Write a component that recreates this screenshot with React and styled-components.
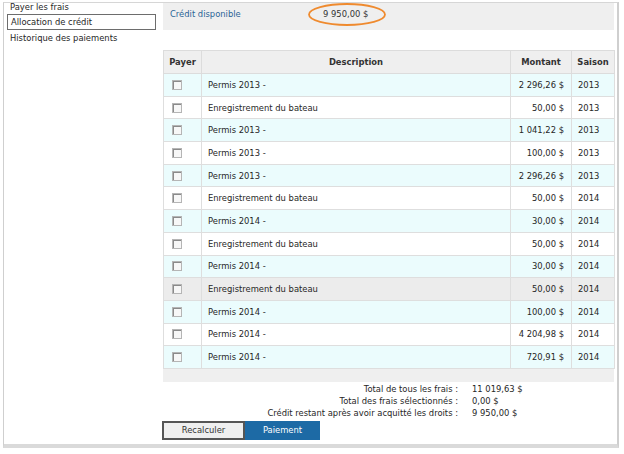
import React from "react";
import styled, { createGlobalStyle } from "styled-components";

const Global = createGlobalStyle`
  html, body { margin: 0; padding: 0; background: #fff; }
  body { font-family: "DejaVu Sans", Verdana, sans-serif; font-size: 8.4px; color: #262626; }
`;

const Frame = styled.div`
  position: relative;
  margin: 2px 0 0 3px;
  width: 613px;
  height: 441px;
  border-top: 1px solid #d6d6d6;
  border-left: 1px solid #cfcfcf;
  border-right: 2px solid #cfcfcf;
  border-bottom: 4px solid #dadada;
  display: flex;
  gap: 7px;
`;

const Sidebar = styled.nav`
  width: 149px;
  margin-top: -1px;
  padding-left: 3px;
  display: flex;
  flex-direction: column;
`;

const NavItem = styled.div`
  box-sizing: border-box;
  height: ${(p) => (p.$active ? "16px" : "11px")};
  line-height: ${(p) => (p.$active ? "14px" : "11px")};
  padding-left: 3px;
  margin: ${(p) => (p.$active ? "1px 0 3px 0" : "0")};
  border: ${(p) => (p.$active ? "1px solid #6d6d6d" : "none")};
  color: #262626;
  white-space: nowrap;
`;

const Main = styled.main`
  width: 451px;
  display: flex;
  flex-direction: column;
`;

const CreditBar = styled.div`
  position: relative;
  height: 27px;
  background: #efefef;
  display: flex;
  align-items: flex-start;
  padding-top: 6px;
  box-sizing: border-box;
`;

const CreditLabel = styled.span`
  color: #2a6496;
  margin-left: 7px;
  width: 153px;
`;

const CreditValue = styled.span`
  color: #333;
`;

const Ellipse = styled.svg`
  position: absolute;
  left: 144px;
  top: -1px;
`;

const Table = styled.table`
  margin-top: 20px;
  border-collapse: collapse;
  table-layout: fixed;
  width: 451px;
`;

const Th = styled.th`
  height: 22px;
  background: #efefef;
  border: 1px solid #dcdcdc;
  font-weight: bold;
  color: #333;
  text-align: center;
  padding: 0;
`;

const Row = styled.tr`
  background: ${(p) => (p.$tone === "cyan" ? "#ebfcfd" : p.$tone === "gray" ? "#ececec" : "#fff")};
`;

const Td = styled.td`
  height: 21.7px;
  border: 1px solid #dedede;
  padding: 0 ${(p) => (p.$align === "right" ? "7px" : "0")} 0 ${(p) => (p.$align === "right" ? "0" : "6px")};
  text-align: ${(p) => p.$align || "left"};
  white-space: nowrap;
  color: #262626;
`;

const CheckCell = styled.td`
  height: 21.7px;
  border: 1px solid #dedede;
  padding: 0 0 0 8px;
`;

const Check = styled.span`
  display: block;
  width: 8px;
  height: 8px;
  border: 1px solid #b5b5b5;
  background: #f7f7f7;
  box-shadow: inset 1px 1px 0 #8a8a8a;
`;

const FooterBand = styled.div`
  height: 13px;
  background: #efefef;
`;

const Totals = styled.div`
  display: grid;
  grid-template-columns: 295px auto;
  column-gap: 14px;
  margin-top: 1px;
  line-height: 12px;
`;

const TotalLabel = styled.span`
  text-align: right;
`;

const TotalValue = styled.span``;

const Buttons = styled.div`
  display: flex;
  margin-top: 2px;
  margin-left: -1px;
`;

const Button = styled.button`
  height: 19px;
  box-sizing: border-box;
  font-family: inherit;
  font-size: 8.4px;
  padding: 0;
  cursor: pointer;
  width: ${(p) => (p.$primary ? "75px" : "83px")};
  background: ${(p) => (p.$primary ? "#1d6aa5" : "#efefef")};
  color: ${(p) => (p.$primary ? "#fff" : "#333")};
  border: ${(p) => (p.$primary ? "1px solid #1d6aa5" : "2px solid #555")};
`;

const rows = [
  ["Permis 2013 -", "2 296,26 $", "2013", "cyan"],
  ["Enregistrement du bateau", "50,00 $", "2013", "white"],
  ["Permis 2013 -", "1 041,22 $", "2013", "cyan"],
  ["Permis 2013 -", "100,00 $", "2013", "white"],
  ["Permis 2013 -", "2 296,26 $", "2013", "cyan"],
  ["Enregistrement du bateau", "50,00 $", "2014", "white"],
  ["Permis 2014 -", "30,00 $", "2014", "cyan"],
  ["Enregistrement du bateau", "50,00 $", "2014", "white"],
  ["Permis 2014 -", "30,00 $", "2014", "cyan"],
  ["Enregistrement du bateau", "50,00 $", "2014", "gray"],
  ["Permis 2014 -", "100,00 $", "2014", "cyan"],
  ["Permis 2014 -", "4 204,98 $", "2014", "white"],
  ["Permis 2014 -", "720,91 $", "2014", "cyan"],
];

export default function App() {
  return (
    <>
      <Global />
      <Frame>
        <Sidebar>
          <NavItem>Payer les frais</NavItem>
          <NavItem $active>Allocation de crédit</NavItem>
          <NavItem>Historique des paiements</NavItem>
        </Sidebar>
        <Main>
          <CreditBar>
            <CreditLabel>Crédit disponible</CreditLabel>
            <CreditValue>9 950,00 $</CreditValue>
            <Ellipse width="80" height="26" viewBox="0 0 80 26">
              <ellipse cx="40" cy="12.5" rx="38" ry="10.5" fill="none" stroke="#ef8a2e" strokeWidth="1.8" />
            </Ellipse>
          </CreditBar>
          <Table>
            <colgroup>
              <col style={{ width: 38 }} />
              <col style={{ width: 309 }} />
              <col style={{ width: 61 }} />
              <col style={{ width: 43 }} />
            </colgroup>
            <thead>
              <tr>
                <Th>Payer</Th>
                <Th>Description</Th>
                <Th>Montant</Th>
                <Th>Saison</Th>
              </tr>
            </thead>
            <tbody>
              {rows.map((r, i) => (
                <Row key={i} $tone={r[3]}>
                  <CheckCell><Check /></CheckCell>
                  <Td>{r[0]}</Td>
                  <Td $align="right">{r[1]}</Td>
                  <Td>{r[2]}</Td>
                </Row>
              ))}
            </tbody>
          </Table>
          <FooterBand />
          <Totals>
            <TotalLabel>Total de tous les frais :</TotalLabel>
            <TotalValue>11 019,63 $</TotalValue>
            <TotalLabel>Total des frais sélectionnés :</TotalLabel>
            <TotalValue>0,00 $</TotalValue>
            <TotalLabel>Crédit restant après avoir acquitté les droits :</TotalLabel>
            <TotalValue>9 950,00 $</TotalValue>
          </Totals>
          <Buttons>
            <Button>Recalculer</Button>
            <Button $primary>Paiement</Button>
          </Buttons>
        </Main>
      </Frame>
    </>
  );
}
